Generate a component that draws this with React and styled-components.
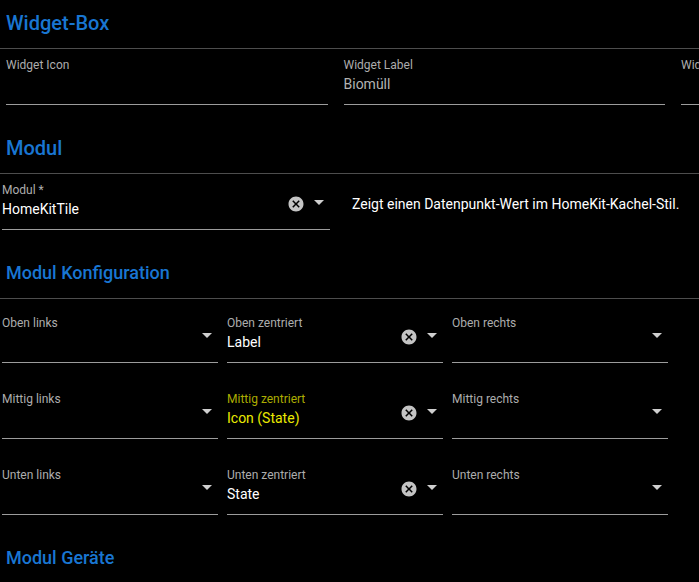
import styled, { createGlobalStyle } from "styled-components";

const GlobalStyle = createGlobalStyle`
  html, body {
    margin: 0;
    padding: 0;
    background: #000;
    overflow: hidden;
  }
  body {
    font-family: Roboto, "Liberation Sans", sans-serif;
    color: #fff;
  }
`;

const Page = styled.div`
  width: 699px;
  height: 582px;
  overflow: hidden;
  background: #000;
`;

const Section = styled.section`
  margin-bottom: 20px;
`;

const Heading = styled.h2`
  margin: 0;
  padding: 11px 6px 13px;
  font-size: ${(p) => (p.$large ? "20px" : "18px")};
  line-height: 24px;
  font-weight: 500;
  color: #1976d2;
  border-bottom: 1px solid #4d4d4d;
  white-space: nowrap;
`;

const WideRow = styled.div`
  display: grid;
  grid-template-columns: repeat(3, 321.5px);
  column-gap: 16px;
  padding-left: 6px;
`;

const ModuleRow = styled.div`
  display: flex;
  align-items: flex-start;
  gap: 22px;
  padding-left: 2px;
  & > :first-child {
    width: 328px;
    flex: none;
  }
`;

const Description = styled.div`
  margin-top: 20px;
  font-size: 14px;
  line-height: 20px;
  color: #fff;
  white-space: nowrap;
`;

const ConfigGrid = styled.div`
  display: grid;
  grid-template-columns: repeat(3, 216px);
  gap: 20px 9px;
  padding: 8px 0 0 2px;
`;

const Field = styled.div`
  position: relative;
  min-width: 0;
  padding: 9px 0 8px;
  border-bottom: 1px solid #9c9c9c;
`;

const Label = styled.div`
  font-size: 12px;
  line-height: 14px;
  color: ${(p) => (p.$focused ? "#acac00" : "#adadad")};
  white-space: nowrap;
`;

const Value = styled.div`
  height: 24px;
  font-size: 14px;
  line-height: 24px;
  white-space: nowrap;
  overflow: hidden;
  color: ${(p) =>
    p.$focused ? "#eaea00" : p.$muted ? "#b3b3b3" : "#fff"};
`;

const Adornment = styled.div`
  position: absolute;
  top: 16px;
  right: -1px;
  height: 24px;
  display: flex;
  align-items: center;
`;

const ClearButton = styled.span`
  width: 22px;
  height: 24px;
  margin-top: 4px;
  display: flex;
  align-items: center;
  justify-content: center;
  color: #c4c4c4;
`;

const ArrowButton = styled.span`
  width: 24px;
  height: 24px;
  display: flex;
  color: #cfcfcf;
`;

const ClearIcon = () => (
  <svg width="18" height="18" viewBox="0 0 24 24" fill="currentColor">
    <path d="M12 2C6.47 2 2 6.470 2 12s4.47 10 10 10 10-4.47 10-10S17.53 2 12 2zm5 13.59L15.59 17 12 13.41 8.41 17 7 15.59 10.59 12 7 8.41 8.41 7 12 10.59 15.59 7 17 8.41 13.41 12 17 15.59z" />
  </svg>
);

const ArrowIcon = () => (
  <svg width="24" height="24" viewBox="0 0 24 24" fill="currentColor">
    <path d="M7 10l5 5 5-5z" />
  </svg>
);

const SelectField = ({ label, value, focused, clearable }) => (
  <Field>
    <Label $focused={focused}>{label}</Label>
    <Value $focused={focused}>{value}</Value>
    <Adornment>
      {clearable && (
        <ClearButton>
          <ClearIcon />
        </ClearButton>
      )}
      <ArrowButton>
        <ArrowIcon />
      </ArrowButton>
    </Adornment>
  </Field>
);

const positions = [
  { label: "Oben links" },
  { label: "Oben zentriert", value: "Label" },
  { label: "Oben rechts" },
  { label: "Mittig links" },
  { label: "Mittig zentriert", value: "Icon (State)", focused: true },
  { label: "Mittig rechts" },
  { label: "Unten links" },
  { label: "Unten zentriert", value: "State" },
  { label: "Unten rechts" },
];

const App = () => {
  return (
    <Page>
      <GlobalStyle />
      <Section>
        <Heading $large>Widget-Box</Heading>
        <WideRow>
          <Field>
            <Label>Widget Icon</Label>
            <Value />
          </Field>
          <Field>
            <Label>Widget Label</Label>
            <Value $muted>Biomüll</Value>
          </Field>
          <Field>
            <Label>Widget Farbe</Label>
            <Value />
          </Field>
        </WideRow>
      </Section>

      <Section>
        <Heading $large>Modul</Heading>
        <ModuleRow>
          <SelectField label="Modul *" value="HomeKitTile" clearable />
          <Description>Zeigt einen Datenpunkt-Wert im HomeKit-Kachel-Stil.</Description>
        </ModuleRow>
      </Section>

      <Section>
        <Heading>Modul Konfiguration</Heading>
        <ConfigGrid>
          {positions.map((p) => (
            <SelectField
              key={p.label}
              label={p.label}
              value={p.value}
              focused={p.focused}
              clearable={!!p.value}
            />
          ))}
        </ConfigGrid>
      </Section>

      <Section>
        <Heading>Modul Geräte</Heading>
      </Section>
    </Page>
  );
};

export default App;
